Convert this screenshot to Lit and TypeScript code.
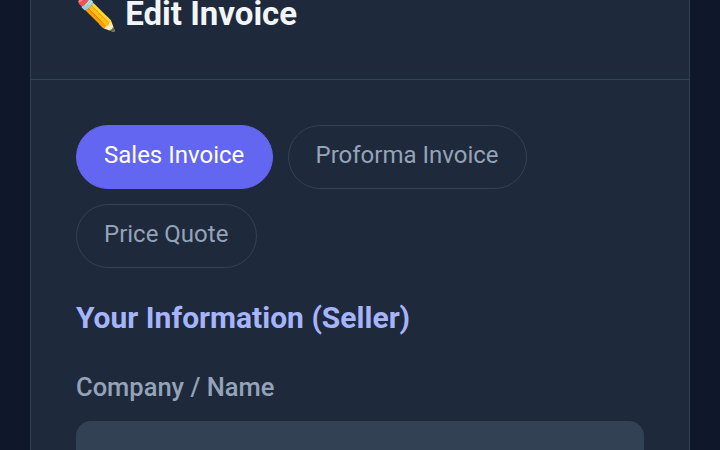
import { LitElement, html, css } from "lit";
import { customElement } from "lit/decorators.js";

@customElement("app-root")
export class AppRoot extends LitElement {
  static styles = css`
    :host { display: block; width: 720px; height: 450px; overflow: hidden; background: #0f172a; font-family: Roboto, "Noto Sans", sans-serif; }
    .card { box-sizing: border-box; width: 660px; height: 450px; margin-left: 30px; background: #1e293b; border: solid #334155; border-width: 0 1px; overflow: hidden; }
    .head { box-sizing: border-box; height: 80px; border-bottom: 1px solid #334155; padding: 0 45px; }
    h1 { margin: 0; padding-top: 1px; font-size: 33px; line-height: 26px; font-weight: 700; color: #f1f5f9; }
    .body { padding: 45px 45px 0; }
    .tabs { display: flex; flex-wrap: wrap; gap: 15px; margin-bottom: 30px; }
    .tab { box-sizing: border-box; height: 64px; padding: 0 27.3px 5px 27px; border-radius: 32px; border: 1.5px solid #334155; color: #94a3b8; font-size: 24px; display: flex; align-items: center; }
    .tab.on { background: #6366f1; border-color: #6366f1; color: #fff; }
    h2 { margin: 0 0 34px; font-size: 30px; line-height: 40px; font-weight: 700; color: #a5b4fc; }
    label { display: block; font-size: 25.5px; line-height: 30px; font-weight: 500; color: #94a3b8; margin-bottom: 19px; }
    .input { height: 60px; border-radius: 15px; background: #334155; }
  `;
  render() {
    return html`<div class="card">
      <div class="head"><h1>✏️ Edit Invoice</h1></div>
      <div class="body">
        <div class="tabs">
          <div class="tab on">Sales Invoice</div>
          <div class="tab">Proforma Invoice</div>
          <div class="tab">Price Quote</div>
        </div>
        <h2>Your Information (Seller)</h2>
        <label>Company / Name</label>
        <div class="input"></div>
      </div>
    </div>`;
  }
}
